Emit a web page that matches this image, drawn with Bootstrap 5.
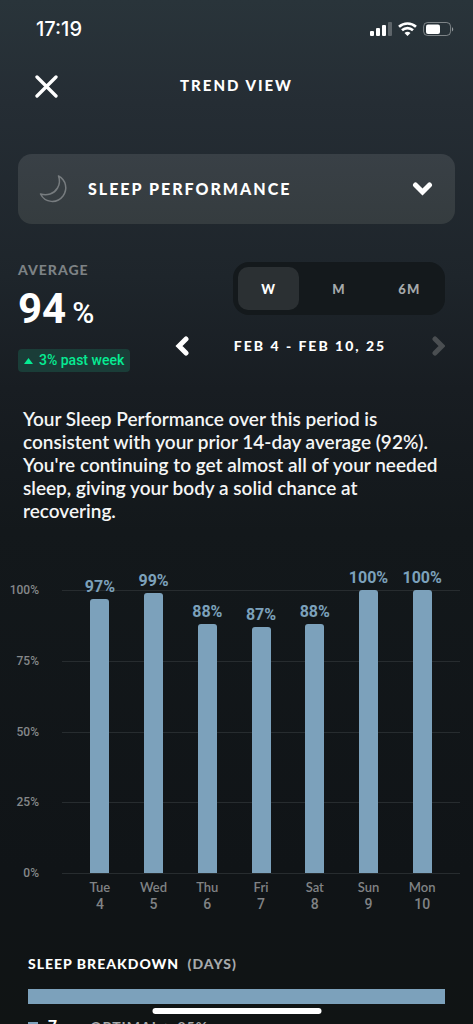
<!DOCTYPE html>
<html lang="en">
<head>
<meta charset="utf-8">
<meta name="viewport" content="width=device-width, initial-scale=1">
<title>Trend View</title>
<link rel="stylesheet" href="https://cdn.jsdelivr.net/npm/bootstrap@5.3.0/dist/css/bootstrap.min.css">
<style>
  :root { --bar: #7ca1bb; --din: Roboto, sans-serif; }
  body { font-family: Lato, sans-serif; color: #fff; background: #101518; font-variant-ligatures: none; }
  .screen { height: 100vh; background: linear-gradient(#29343a 0%, #252d34 10%, #1e252b 27%, #181d22 38%, #13181b 52%, #101417 85%, #101414 100%); }
  .status { height: 58px; padding: 0 18px 0 36px; }
  .clock { font: 500 20px/24px Inter, sans-serif; }
  .topbar { height: 56px; padding: 0 34px; }
  .topbar h1 { padding-bottom: 2px; }
  .caps { font-weight: 900; letter-spacing: 2px; text-transform: uppercase; font-size: 15px; line-height: 22px; }
  .close-space { width: 24px; }
  .plain { background: none; border: 0; padding: 0; color: inherit; display: flex; }
  .picker { height: 70px; margin: 40px 18px 0; padding: 0 22px 0 20px; border-radius: 14px; background: linear-gradient(#394046, #353c3f); }
  .picker select { appearance: none; background: none; border: 0; color: #fff; padding: 0; margin-left: 20px; min-width: 0; font-size: 16px; }
  .picker option { color: #000; }
  .summary { margin: 38px 28px 0 18px; }
  .label-avg { font-size: 14px; line-height: 16px; letter-spacing: 1px; color: #7d8285; }
  .score { font: 700 42px/48px var(--din); margin-top: 7px; gap: 6px; }
  .score small { font-size: 30px; font-weight: 500; }
  .trend { font: 500 14px/23px var(--din); color: #06eb93; background: #1a3d38; border-radius: 4px; padding: 0 6px; margin-top: 12px; gap: 6px; }
  .controls { width: 270px; }
  .range { height: 53px; width: 212px; padding: 5px; gap: 9px; border-radius: 16px; background: #14191c; }
  .range button { flex: 1; border: 0; border-radius: 10px; background: none; font-size: 13px; letter-spacing: 1px; color: #a6a9ab; padding: 0; }
  .range button.active { background: #2b3033; color: #fff; }
  .dates { margin-top: 20px; }
  .dates .caps { font-size: 14px; }
  .note { margin: 35px 23px 0; font-size: 19px; line-height: 23px; font-weight: 600; color: #f4f5f5; }
  .chart { margin: 68px 13px 0 8px; }
  .plot { height: 284px; }
  .axis { width: 31px; margin-right: 23px; font: 500 12px/14px var(--din); color: #85888a; }
  .axis span { height: 1px; line-height: 1px; text-align: right; white-space: nowrap; }
  .grid-line { height: 1px; background: #272c2f; }
  .bars { padding: 0 11px 1px; }
  .bar-value { font: 700 16px/20px var(--din); color: var(--bar); margin-bottom: 2px; }
  .bar-fill { width: 19px; flex-shrink: 0; background: var(--bar); border-radius: 3px 3px 0 0; }
  .col-day { flex: 1 1 0; min-width: 0; }
  .days { margin-left: 54px; padding: 5px 11px 0; font-size: 13px; font-weight: 600; line-height: 17px; color: #808385; }
  .days b { font: 500 14px/17px var(--din); display: block; }
  .breakdown { margin: 42px 28px 0; }
  .breakdown h2 { font-size: 14px; line-height: 18px; margin: 0 0 16px; letter-spacing: 1px; }
  .breakdown h2 span { color: #a6a9ab; margin-left: 4px; }
  .total { height: 15px; background: var(--bar); }
  .legend { margin-top: 15px; font-size: 14px; line-height: 16px; }
  .legend i { width: 10px; height: 10px; background: var(--bar); }
  .legend b { font: 700 16px/16px var(--din); margin: 0 33px 0 10px; }
  .legend span { color: #a6a9ab; letter-spacing: 1px; font-weight: 700; }
  .home { width: 169px; height: 6px; border-radius: 3px; background: #fff; bottom: 10px; }
</style>
</head>
<body>
<div class="screen position-relative overflow-hidden">
  <div class="status d-flex align-items-center justify-content-between">
    <span class="clock">17:19</span>
    <svg width="86" height="18" viewBox="0 0 86 18" fill="#fff" role="img" aria-label="Signal, Wi-Fi, battery">
      <rect x="1" y="11" width="4" height="5" rx="1"/><rect x="7" y="8" width="4" height="8" rx="1"/><rect x="13" y="5" width="4" height="11" rx="1"/><rect x="19" y="2" width="4" height="14" rx="1" opacity=".25"/>
      <g fill="none" stroke="#fff" stroke-width="2.600"><path d="M30 6.800a12.500 12.500 0 0 1 17 0M33 10.300a8 8 0 0 1 11 0"/></g><path d="M35.500 13a4.500 4.500 0 0 1 6 0L38.500 16z"/>
      <rect x="54.600" y="2.500" width="27" height="13" rx="4" fill="none" stroke="#fff" stroke-opacity=".4"/><rect x="57" y="4.500" width="14" height="9.500" rx="2"/><path d="M83 7v4.500q2.500-2.200 0-4.500" opacity=".5"/>
    </svg>
  </div>
  <header class="topbar d-flex align-items-center">
    <button class="plain" aria-label="Close"><svg width="24" height="24" viewBox="0 0 24 24" stroke="#fff" stroke-width="3.300" stroke-linecap="round"><path d="M3 3l19 19M22 3L3 22"/></svg></button>
    <h1 class="caps m-0 flex-fill text-center">Trend View</h1>
    <span class="close-space"></span>
  </header>
  <main>
    <div class="picker d-flex align-items-center">
      <svg width="30" height="30" viewBox="0 0 30 30" fill="none" stroke="#777c7f" stroke-width="1.500" stroke-linejoin="round"><path d="M20.500 2C28 6 30 15 25 22C19 30 7 29 2.500 20C9 22 16 20 19.500 14C22 10 22 6 20.500 2z"/></svg>
      <select class="caps flex-fill" aria-label="Metric"><option>Sleep Performance</option></select>
      <svg width="21" height="16" viewBox="0 0 21 16" fill="none" stroke="#fff" stroke-width="5" stroke-linecap="round"><path d="M3.500 4l7 7 7-7"/></svg>
    </div>
    <section class="summary d-flex justify-content-between">
      <div class="d-flex flex-column align-items-start">
        <span class="caps label-avg">Average</span>
        <div class="score d-flex align-items-baseline">94<small>%</small></div>
        <div class="trend d-flex align-items-center"><svg width="9" height="6" fill="currentColor"><path d="M0 6l4.500-6L9 6z"/></svg>3% past week</div>
      </div>
      <div class="controls d-flex flex-column align-items-end">
        <div class="range d-flex"><button class="caps active">W</button><button class="caps">M</button><button class="caps">6M</button></div>
        <div class="dates w-100 d-flex align-items-center justify-content-between">
          <button class="plain" aria-label="Previous week"><svg width="16" height="20" viewBox="0 0 16 20" fill="none" stroke="#fff" stroke-width="5" stroke-linecap="round"><path d="M11 3l-7 7 7 7"/></svg></button>
          <span class="caps">Feb 4 - Feb 10, 25</span>
          <button class="plain" aria-label="Next week"><svg width="16" height="20" viewBox="0 0 16 20" fill="none" stroke="#4a4e51" stroke-width="5" stroke-linecap="round"><path d="M6 3l7 7-7 7"/></svg></button>
        </div>
      </div>
    </section>
    <p class="note">Your Sleep Performance over this period is consistent with your prior 14-day average (92%). You're continuing to get almost all of your needed sleep, giving your body a solid chance at recovering.</p>
    <section class="chart">
      <div class="plot d-flex">
        <div class="axis d-flex flex-column justify-content-between"><span>100%</span><span>75%</span><span>50%</span><span>25%</span><span>0%</span></div>
        <div class="flex-fill position-relative d-flex flex-column justify-content-between">
          <div class="grid-line"></div><div class="grid-line"></div><div class="grid-line"></div><div class="grid-line"></div><div class="grid-line"></div>
          <div class="bars position-absolute top-0 start-0 w-100 h-100 d-flex">
            <div class="col-day d-flex flex-column justify-content-end align-items-center"><span class="bar-value">97%</span><div class="bar-fill" style="height:97%"></div></div>
            <div class="col-day d-flex flex-column justify-content-end align-items-center"><span class="bar-value">99%</span><div class="bar-fill" style="height:99%"></div></div>
            <div class="col-day d-flex flex-column justify-content-end align-items-center"><span class="bar-value">88%</span><div class="bar-fill" style="height:88%"></div></div>
            <div class="col-day d-flex flex-column justify-content-end align-items-center"><span class="bar-value">87%</span><div class="bar-fill" style="height:87%"></div></div>
            <div class="col-day d-flex flex-column justify-content-end align-items-center"><span class="bar-value">88%</span><div class="bar-fill" style="height:88%"></div></div>
            <div class="col-day d-flex flex-column justify-content-end align-items-center"><span class="bar-value">100%</span><div class="bar-fill" style="height:100%"></div></div>
            <div class="col-day d-flex flex-column justify-content-end align-items-center"><span class="bar-value">100%</span><div class="bar-fill" style="height:100%"></div></div>
          </div>
        </div>
      </div>
      <div class="days d-flex text-center">
        <div class="col-day">Tue<b>4</b></div><div class="col-day">Wed<b>5</b></div><div class="col-day">Thu<b>6</b></div><div class="col-day">Fri<b>7</b></div><div class="col-day">Sat<b>8</b></div><div class="col-day">Sun<b>9</b></div><div class="col-day">Mon<b>10</b></div>
      </div>
    </section>
    <section class="breakdown">
      <h2 class="caps">Sleep Breakdown <span>(days)</span></h2>
      <div class="total"></div>
      <div class="legend d-flex align-items-center"><i></i><b>7</b><span>OPTIMAL ≥ 85%</span></div>
    </section>
  </main>
  <div class="home position-absolute start-50 translate-middle-x"></div>
</div>
<script src="https://cdn.jsdelivr.net/npm/bootstrap@5.3.0/dist/js/bootstrap.bundle.min.js"></script>
</body>
</html>
